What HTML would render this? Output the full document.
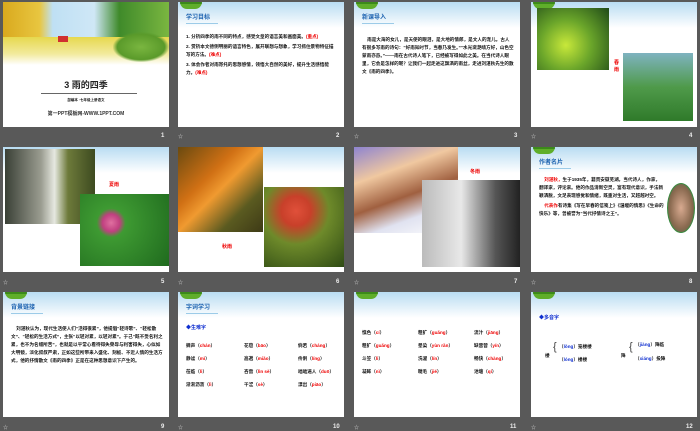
<!DOCTYPE html>
<html><head><meta charset="utf-8"><style>
*{margin:0;padding:0;box-sizing:border-box}
body{width:700px;height:431px;background:#595959;position:relative;overflow:hidden;font-family:"Liberation Sans","Noto Sans CJK SC",sans-serif}
.s{position:absolute;width:166px;height:125px;background:#fff;overflow:hidden}
.hd{position:absolute;left:0;top:0;width:100%;height:26px;background:linear-gradient(#b9dcf2,#fff)}
.lf{position:absolute;left:2px;top:0;width:22px;height:7px;border-radius:0 0 10px 10px;background:#5fae2a;border-top:2px solid #3c8a1a}
.tt{position:absolute;left:8px;top:10px;font-size:6px;font-weight:bold;color:#1c62b0;border-bottom:1px solid #9ccbe8;padding-bottom:2px;width:32px}
.n{position:absolute;color:#eee;font-size:6px;font-weight:bold}
.ic{position:absolute;color:#ccc;font-size:5px}
.p{position:absolute;font-size:4.6px;line-height:8px;color:#111;font-weight:bold}
.r{color:#e00}
.pic{position:absolute}
</style></head><body>

<!-- slide 1 -->
<div class="s" style="left:3px;top:2px">
<div class="pic" style="left:0;top:0;width:166px;height:62px;background:linear-gradient(90deg,#d9a91e 0,#e8c640 22%,#bfe0f4 30%,#cfe7f6 55%,#3f8a2a 70%,#7ab640 100%)"></div>
<div class="pic" style="left:0;top:35px;width:166px;height:28px;background:linear-gradient(#e6d84e,#f2ea9c 60%,#fff)"></div>
<div class="pic" style="left:110px;top:30px;width:56px;height:30px;background:radial-gradient(#7ab640,#5a9a2a 60%,rgba(255,255,255,0) 72%)"></div>
<div class="pic" style="left:55px;top:34px;width:10px;height:6px;background:#d03030"></div>
<div class="p" style="left:0;top:78px;width:166px;text-align:center;font-size:9px;line-height:10px;color:#222">3&nbsp;雨的四季</div>
<div class="pic" style="left:38px;top:91px;width:96px;height:1px;background:#666"></div>
<div class="p" style="left:0;top:94px;width:166px;text-align:center;font-size:3.5px">部编本 ·七年级上册语文</div>
<div class="p" style="left:0;top:108px;width:166px;text-align:center;font-size:5px;color:#333">第一PPT模板网-WWW.1PPT.COM</div>
</div>
<div class="n" style="left:161px;top:133px">1</div>

<!-- slide 2 -->
<div class="s" style="left:178px;top:2px">
<div class="hd"></div><div class="lf"></div><div class="tt">学习目标</div>
<div class="p" style="left:8px;top:31px;width:152px">1. 分析四季的雨不同的特点，感受文章的语言美和画面美。<span class="r">(重点)</span><br><div style="height:2px"></div>2. 赏析本文德侧明丽的语言特色，展开联想与想象，学习抓住景物特征描写的方法。<span class="r">(难点)</span><div style="height:2px"></div>3. 体会作者对雨寄托的思想感情，领悟大自然的美好，提升生活感悟能力。<span class="r">(难点)</span></div>
</div>
<div class="ic" style="left:178px;top:133px">☆</div><div class="n" style="left:336px;top:133px">2</div>

<!-- slide 3 -->
<div class="s" style="left:354px;top:2px">
<div class="hd"></div><div class="lf"></div><div class="tt">新课导入</div>
<div class="p" style="left:8px;top:34px;width:152px">&nbsp;&nbsp;&nbsp;&nbsp;雨是大海的女儿，是天使的眼泪，是大地的情郎，是文人的宠儿。古人有很多写雨的诗句：“好雨知时节，当春乃发生。”“水光潋滟晴方好，山色空蒙雨亦奇。”——雨在古代诗人笔下，已经被写得如此之美。在当代诗人眼里，它会是怎样的呢？让我们一起走进这飘洒的雨丝，走进刘湛秋先生的散文《雨的四季》。</div>
</div>
<div class="ic" style="left:354px;top:133px">☆</div><div class="n" style="left:514px;top:133px">3</div>

<!-- slide 4 -->
<div class="s" style="left:531px;top:2px">
<div class="hd"></div><div class="lf"></div>
<div class="pic" style="left:6px;top:6px;width:72px;height:62px;background:radial-gradient(circle at 40% 60%,#c8e83a,#6aa52a 45%,#1f4a18)"></div>
<div class="pic" style="left:92px;top:51px;width:70px;height:68px;background:linear-gradient(#7fb3c0,#4f9a4a 50%,#2f7a2a)"></div>
<div class="p r" style="left:83px;top:58px;font-size:5px;line-height:7px;width:6px">春雨</div>
</div>
<div class="ic" style="left:531px;top:133px">☆</div><div class="n" style="left:689px;top:133px">4</div>

<!-- slide 5 -->
<div class="s" style="left:3px;top:147px">
<div class="hd"></div>
<div class="pic" style="left:2px;top:2px;width:90px;height:75px;background:linear-gradient(90deg,#3a4036,#9a9c90 40%,#e6e8e0 55%,#6d7a3a 70%,#3d4a20)"></div>
<div class="pic" style="left:77px;top:47px;width:89px;height:72px;background:radial-gradient(circle at 35% 40%,#e070a0 0,#c04080 12%,#3e9a32 20%,#1f6a1e 100%)"></div>
<div class="p r" style="left:106px;top:34px;font-size:5px">夏雨</div>
</div>
<div class="ic" style="left:3px;top:279px">☆</div><div class="n" style="left:161px;top:279px">5</div>

<!-- slide 6 -->
<div class="s" style="left:178px;top:147px">
<div class="hd"></div>
<div class="pic" style="left:0;top:0;width:85px;height:85px;background:linear-gradient(135deg,#6a4a10,#d07014 35%,#f09a30 50%,#5a5a20 75%,#3e3a16)"></div>
<div class="pic" style="left:86px;top:40px;width:80px;height:80px;background:radial-gradient(circle at 40% 30%,#e0503a 0,#c8402a 20%,#6e8a2a 45%,#2e4a14)"></div>
<div class="p r" style="left:44px;top:96px;font-size:5px">秋雨</div>
</div>
<div class="ic" style="left:178px;top:279px">☆</div><div class="n" style="left:336px;top:279px">6</div>

<!-- slide 7 -->
<div class="s" style="left:354px;top:147px">
<div class="hd"></div>
<div class="pic" style="left:0;top:0;width:104px;height:86px;background:linear-gradient(160deg,#8e84d0,#f0c8a0 30%,#a06040 55%,#e0e2f0 75%,#fff)"></div>
<div class="pic" style="left:68px;top:33px;width:98px;height:87px;background:linear-gradient(90deg,#bbb,#e8e8e8 40%,#555 75%,#222)"></div>
<div class="p r" style="left:116px;top:21px;font-size:5px">冬雨</div>
</div>
<div class="ic" style="left:354px;top:279px">☆</div><div class="n" style="left:514px;top:279px">7</div>

<!-- slide 8 -->
<div class="s" style="left:531px;top:147px">
<div class="hd"></div><div class="lf"></div><div class="tt">作者名片</div>
<div class="p" style="left:8px;top:29px;width:125px">&nbsp;&nbsp;&nbsp;&nbsp;<span class="r">刘湛秋，</span>生于1935年，籍贯安徽芜湖。当代诗人，作家，翻译家，评论家。他的作品清新空灵，富有现代意识，手法新颖洒脱，文足表现感觉和情绪，既重对生活，又超越时空。<div style="height:2px"></div>&nbsp;&nbsp;&nbsp;&nbsp;<span class="r">代表作</span>有诗集《写在早春的信笺上》《温暖的情思》《生命的快乐》等，曾被誉为“当代抒情诗之王”。</div>
<div class="pic" style="left:136px;top:36px;width:28px;height:50px;border-radius:50%;border:1px solid #3a8a40;background:radial-gradient(#d8aa90,#8a6a50 60%,#3a6a40)"></div>
</div>
<div class="ic" style="left:531px;top:279px">☆</div><div class="n" style="left:689px;top:279px">8</div>

<!-- slide 9 -->
<div class="s" style="left:3px;top:292px">
<div class="hd"></div><div class="lf"></div><div class="tt">背景链接</div>
<div class="p" style="left:8px;top:33px;width:152px">&nbsp;&nbsp;&nbsp;&nbsp;刘湛秋认为，现代生活使人们“活得很累”，他提倡“轻诗歌”、“轻松散文”、“轻松的生活方式”，主张“以轻对累，以轻对累”。于己“既不受名利之累，也不为名缰所苦”，也就是以平常心看待得失荣辱与利害得失，心似如大明镜，淡化叔叔严肃，正如这些所带来入盛化、刻板、不近人情的生活方式，他的抒情散文《雨的四季》正是在这种思想意识下产生的。</div>
</div>
<div class="ic" style="left:3px;top:424px">☆</div><div class="n" style="left:161px;top:424px">9</div>

<!-- slide 10 -->
<div class="s" style="left:178px;top:292px">
<div class="hd"></div><div class="lf"></div><div class="tt">字词学习</div>
<div class="p" style="left:8px;top:32px;color:#1030d0;font-size:5px">◆生难字</div>
<div class="p" style="left:8px;top:47px;width:155px;line-height:13px">
<span style="position:absolute;left:0;top:0">蝉声（<span class="r">chán</span>）</span><span style="position:absolute;left:58px;top:0">花苞（<span class="r">bāo</span>）</span><span style="position:absolute;left:112px;top:0">倘若（<span class="r">cháng</span>）</span>
<span style="position:absolute;left:0;top:13px">静谧（<span class="r">mì</span>）</span><span style="position:absolute;left:58px;top:13px">高邈（<span class="r">miǎo</span>）</span><span style="position:absolute;left:112px;top:13px">伶俐（<span class="r">líng</span>）</span>
<span style="position:absolute;left:0;top:26px">莅临（<span class="r">lì</span>）</span><span style="position:absolute;left:58px;top:26px">吝啬（<span class="r">lìn sè</span>）</span><span style="position:absolute;left:112px;top:26px">咄咄逼人（<span class="r">duō</span>）</span>
<span style="position:absolute;left:0;top:39px">淅淅沥沥（<span class="r">lì</span>）</span><span style="position:absolute;left:58px;top:39px">干涩（<span class="r">sè</span>）</span><span style="position:absolute;left:112px;top:39px">漂出（<span class="r">piāo</span>）</span></div>
</div>
<div class="ic" style="left:178px;top:424px">☆</div><div class="n" style="left:333px;top:424px">10</div>

<!-- slide 11 -->
<div class="s" style="left:354px;top:292px">
<div class="hd"></div><div class="lf"></div>
<div class="p" style="left:8px;top:34px;width:155px;line-height:13px">
<span style="position:absolute;left:0;top:0">憔色（<span class="r">cí</span>）</span><span style="position:absolute;left:56px;top:0">粗犷（<span class="r">guǎng</span>）</span><span style="position:absolute;left:112px;top:0">流汁（<span class="r">jiāng</span>）</span>
<span style="position:absolute;left:0;top:13px">粗犷（<span class="r">guǎng</span>）</span><span style="position:absolute;left:56px;top:13px">晕染（<span class="r">yùn rǎn</span>）</span><span style="position:absolute;left:112px;top:13px">缺营营（<span class="r">yín</span>）</span>
<span style="position:absolute;left:0;top:26px">斗笠（<span class="r">lì</span>）</span><span style="position:absolute;left:56px;top:26px">洗濯（<span class="r">lín</span>）</span><span style="position:absolute;left:112px;top:26px">畅快（<span class="r">chàng</span>）</span>
<span style="position:absolute;left:0;top:39px">凝眸（<span class="r">nì</span>）</span><span style="position:absolute;left:56px;top:39px">睫毛（<span class="r">jié</span>）</span><span style="position:absolute;left:112px;top:39px">池塘（<span class="r">qí</span>）</span></div>
</div>
<div class="ic" style="left:354px;top:424px">☆</div><div class="n" style="left:510px;top:424px">11</div>

<!-- slide 12 -->
<div class="s" style="left:531px;top:292px">
<div class="hd"></div><div class="lf"></div>
<div class="p" style="left:8px;top:22px;color:#1030d0;font-size:5px">◆多音字</div>
<div class="p" style="left:14px;top:60px">楼</div>
<div class="p" style="left:22px;top:51px;font-size:11px;font-weight:normal;color:#444">{</div>
<div class="p" style="left:28px;top:51px">（<span style="color:#1030d0">lǒng</span>）笼楼楼</div>
<div class="p" style="left:28px;top:64px">（<span style="color:#1030d0">lóng</span>）楼楼</div>
<div class="p" style="left:90px;top:60px">降</div>
<div class="p" style="left:98px;top:51px;font-size:11px;font-weight:normal;color:#444">{</div>
<div class="p" style="left:104px;top:49px">（<span style="color:#1030d0">jiàng</span>）降临</div>
<div class="p" style="left:104px;top:63px">（<span style="color:#1030d0">xiáng</span>）投降</div>
</div>
<div class="ic" style="left:531px;top:424px">☆</div><div class="n" style="left:686px;top:424px">12</div>

</body></html>
